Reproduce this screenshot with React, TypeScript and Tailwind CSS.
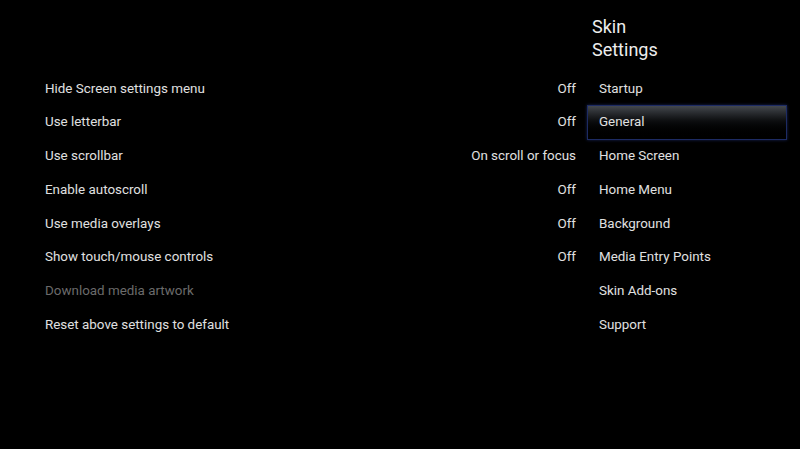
import React from 'react';

type Setting = { label: string; value?: string; disabled?: boolean };

const settings: Setting[] = [
  { label: 'Hide Screen settings menu', value: 'Off' },
  { label: 'Use letterbar', value: 'Off' },
  { label: 'Use scrollbar', value: 'On scroll or focus' },
  { label: 'Enable autoscroll', value: 'Off' },
  { label: 'Use media overlays', value: 'Off' },
  { label: 'Show touch/mouse controls', value: 'Off' },
  { label: 'Download media artwork', disabled: true },
  { label: 'Reset above settings to default' },
];

const categories = [
  'Startup',
  'General',
  'Home Screen',
  'Home Menu',
  'Background',
  'Media Entry Points',
  'Skin Add-ons',
  'Support',
];

const App: React.FC = () => {
  const active = 'General';

  return (
    <div
      className="w-[800px] h-[449px] bg-black text-[#e0e0e0] flex overflow-hidden"
      style={{ fontFamily: 'Roboto, "Noto Sans", sans-serif' }}
    >
      {/* Settings list */}
      <div className="flex-1 pl-[45px] pr-[11px] pt-[72px]">
        {settings.map((s) => (
          <div
            key={s.label}
            className={`h-[33.7px] flex items-center justify-between text-[13.4px] ${
              s.disabled ? 'text-[#6b6b6b]' : ''
            }`}
          >
            <span>{s.label}</span>
            {s.value && <span>{s.value}</span>}
          </div>
        ))}
      </div>

      {/* Category sidebar */}
      <div className="w-[200px] mr-[13px] flex flex-col">
        <div className="pt-[15px] pl-[5px] text-[18px] leading-[23px] text-[#ededed] h-[72px]">
          <div>Skin</div>
          <div>Settings</div>
        </div>
        {categories.map((c) =>
          c === active ? (
            <div
              key={c}
              className="h-[35px] -my-[0.65px] flex items-center pl-[11px] text-[13.4px] border border-[#1d2b63] bg-gradient-to-b from-[#44484e] via-[#0d0e10] via-45% to-black shadow-[0_0_3px_rgba(40,60,140,0.6)]"
            >
              {c}
            </div>
          ) : (
            <div key={c} className="h-[33.7px] flex items-center pl-[12px] text-[13.4px]">
              {c}
            </div>
          )
        )}
      </div>
    </div>
  );
};

export default App;
